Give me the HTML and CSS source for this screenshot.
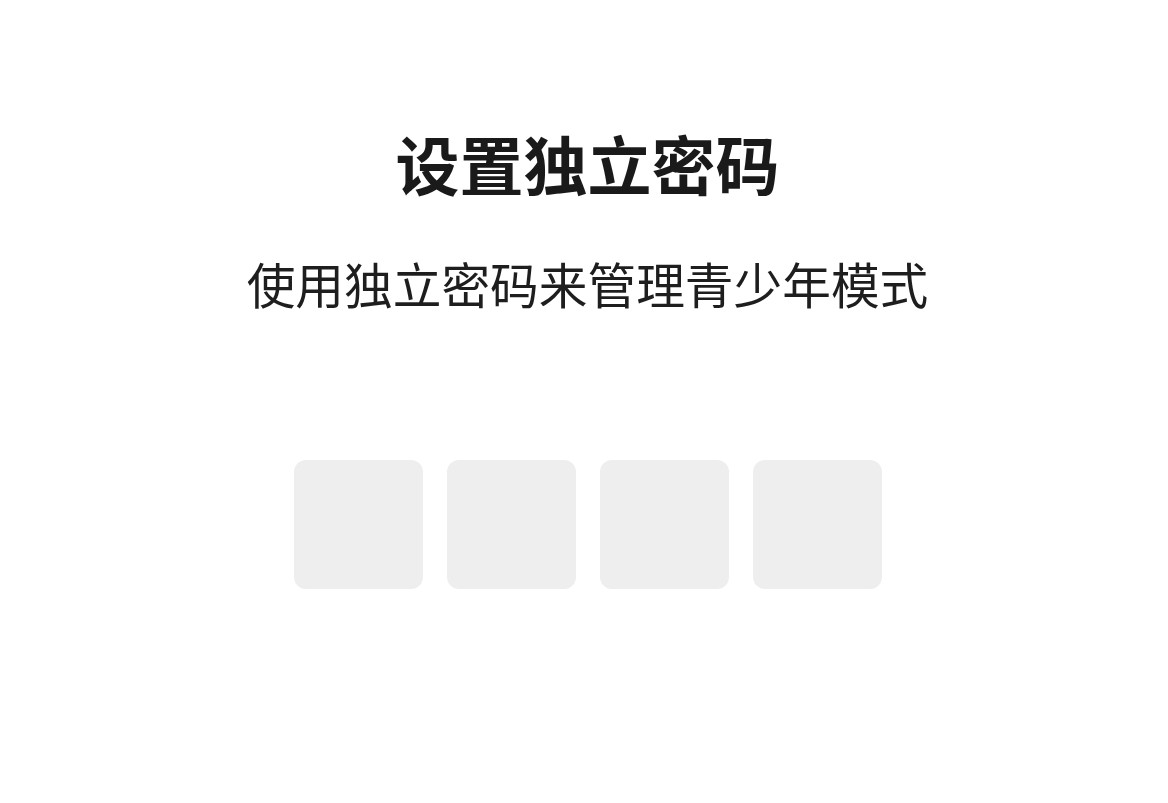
FILE: index.html
```html
<!DOCTYPE html>
<html lang="zh-CN">
<head>
<meta charset="utf-8">
<title>设置独立密码</title>
<link rel="stylesheet" href="styles.css">
</head>
<body>
<main class="page">
  <h1 class="title">设置独立密码</h1>
  <p class="subtitle">使用独立密码来管理青少年模式</p>
  <div class="code">
    <div class="cell"></div>
    <div class="cell"></div>
    <div class="cell"></div>
    <div class="cell"></div>
  </div>
</main>
</body>
</html>
```
FILE: styles.css
```css
html, body {
  margin: 0;
  padding: 0;
  background: #ffffff;
}
body {
  font-family: "Noto Sans CJK SC", "Noto Sans", sans-serif;
  color: #1c1c1c;
}
.page {
  display: flex;
  flex-direction: column;
  align-items: center;
  padding-top: 130px;
  padding-left: 7px;
}
.title {
  margin: 0;
  font-size: 64px;
  line-height: 64px;
  font-weight: 700;
  color: #1a1a1a;
}
.subtitle {
  margin: 63px 0 0;
  font-size: 48.7px;
  line-height: 52px;
  font-weight: 400;
  color: #1e1e1e;
}
.code {
  display: flex;
  gap: 24px;
  margin-top: 151px;
}
.cell {
  width: 129px;
  height: 129px;
  border-radius: 12px;
  background: #eeeeee;
}
```
